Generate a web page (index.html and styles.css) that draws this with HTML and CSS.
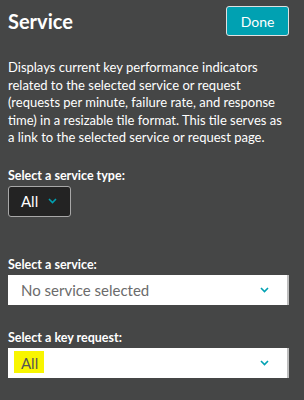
FILE: index.html
```html
<!DOCTYPE html>
<html lang="en">
<head>
    <meta charset="UTF-8">
    <meta name="viewport" content="width=device-width, initial-scale=1.0">
    <title>Service</title>
    <link rel="stylesheet" href="styles.css">
</head>
<body>

<div class="panel">
    <div class="header">
        <h1>Service</h1>
        <button class="done-btn">Done</button>
    </div>
    <p class="desc">Displays current key performance indicators related to the selected service or request (requests per minute, failure rate, and response time) in a resizable tile format. This tile serves as a link to the selected service or request page.</p>

    <div class="field">
        <label>Select a service type:</label>
        <div class="select dark">
            <span>All</span>
            <svg class="chev" width="9" height="6" viewBox="0 0 9 6"><path d="M1 1l3.5 3.5L8 1" fill="none" stroke="#00a1b2" stroke-width="1.6"/></svg>
        </div>
    </div>

    <div class="field gap-big">
        <label>Select a service:</label>
        <div class="select light">
            <span class="placeholder">No service selected</span>
            <svg class="chev" width="9" height="6" viewBox="0 0 9 6"><path d="M1 1l3.5 3.5L8 1" fill="none" stroke="#00a1b2" stroke-width="1.6"/></svg>
        </div>
    </div>

    <div class="field gap-key">
        <label>Select a key request:</label>
        <div class="select light">
            <span class="value"><mark>All</mark></span>
            <svg class="chev" width="9" height="6" viewBox="0 0 9 6"><path d="M1 1l3.5 3.5L8 1" fill="none" stroke="#00a1b2" stroke-width="1.6"/></svg>
        </div>
    </div>
</div>

</body>
</html>
```

FILE: styles.css
```css
body {
    margin: 0;
    background-color: #454646;
    font-family: Lato, "Noto Sans", sans-serif;
    color: #fff;
    height: 400px;
    overflow: hidden;
}
.panel {
    padding: 6px 15px 0 8px;
}
.header {
    display: flex;
    justify-content: space-between;
    align-items: center;
}
h1 {
    margin: 0;
    font-size: 20px;
    font-weight: bold;
}
.done-btn {
    width: 63px;
    height: 30px;
    background-color: #00a1b2;
    color: #fff;
    border: 1px solid #e0e0e0;
    border-radius: 3px;
    font-family: inherit;
    font-size: 14px;
    padding: 0;
}
.desc {
    margin: 23px 0 0 0;
    font-size: 13px;
    line-height: 17.5px;
}
.field {
    margin-top: 21px;
}
.field label {
    display: block;
    font-size: 12.5px;
    font-weight: bold;
    margin-bottom: 3px;
}
.gap-big {
    margin-top: 40px;
}
.gap-key {
    margin-top: 25px;
}
.select {
    display: flex;
    align-items: center;
    justify-content: space-between;
    height: 30px;
    box-sizing: border-box;
    font-size: 15px;
}
.select.dark {
    width: 63px;
    height: 31px;
    background-color: #232323;
    border: 1px solid #a8a8a8;
    border-radius: 3px;
    padding: 0 13px 0 12px;
    color: #fff;
}
.select.light {
    width: 281px;
    background-color: #fff;
    border-right: 2px solid #bdbdbd;
    padding: 0 18px 0 13px;
    color: #666;
}
.placeholder {
    color: #6b6b6b;
}
.value mark {
    background-color: #f8f500;
    color: #555;
    padding: 3px 6px 1px 7px;
    margin-left: -7px;
}
```
